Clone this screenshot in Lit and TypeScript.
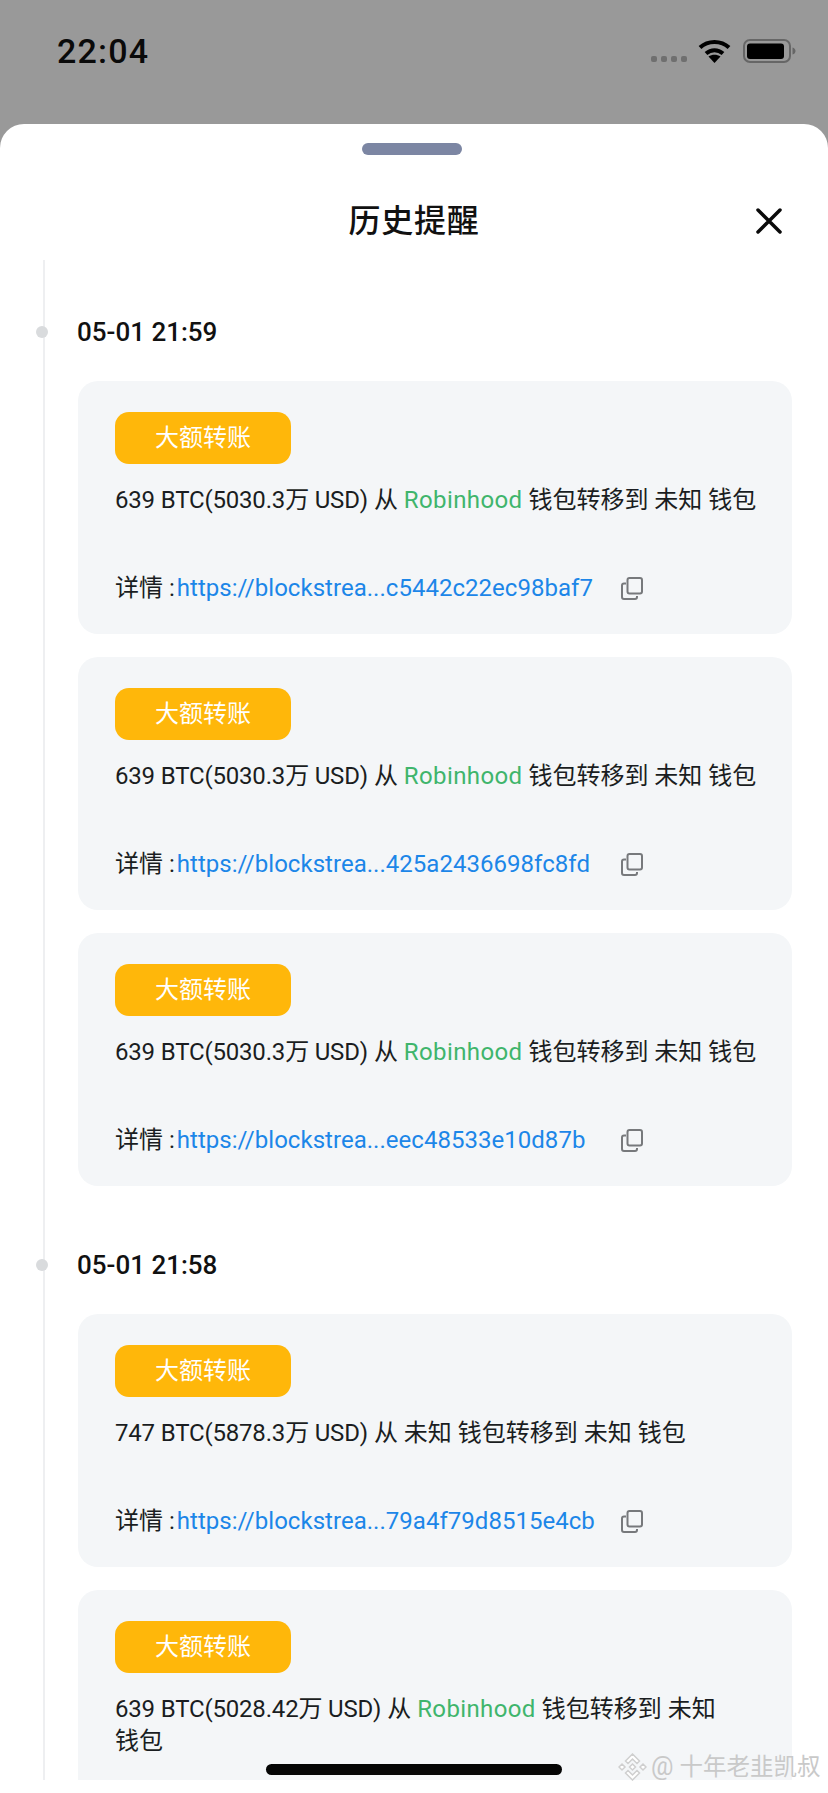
import { LitElement, html, css, svg } from "lit";
import { customElement } from "lit/decorators.js";

type Card = { amt: string; from?: string; to: string; hash?: string };
const groups: { date: string; cards: Card[] }[] = [
  {
    date: "05-01 21:59",
    cards: [
      { amt: "639 BTC(5030.3万 USD)", from: "Robinhood", to: "未知", hash: "https://blockstrea...c5442c22ec98baf7" },
      { amt: "639 BTC(5030.3万 USD)", from: "Robinhood", to: "未知", hash: "https://blockstrea...425a2436698fc8fd" },
      { amt: "639 BTC(5030.3万 USD)", from: "Robinhood", to: "未知", hash: "https://blockstrea...eec48533e10d87b" },
    ],
  },
  {
    date: "05-01 21:58",
    cards: [
      { amt: "747 BTC(5878.3万 USD)", to: "未知", hash: "https://blockstrea...79a4f79d8515e4cb" },
      { amt: "639 BTC(5028.42万 USD)", from: "Robinhood", to: "未知" },
    ],
  },
];

const copyIcon = svg`<svg class="copy" viewBox="0 0 22 23" width="22" height="23" fill="none" stroke="#77797c" stroke-width="2">
  <rect x="6.5" y="1" width="14.5" height="15.5" rx="2"/>
  <path d="M5 6.5H3a2 2 0 0 0-2 2V20a2 2 0 0 0 2 2h11a2 2 0 0 0 2-2v-1"/>
</svg>`;

@customElement("app-root")
export class AppRoot extends LitElement {
  static styles = css`
    :host {
      display: block;
      width: 828px;
      height: 1793px;
      overflow: hidden;
      position: relative;
      background: #999999;
      font-family: Roboto, "Noto Sans CJK SC", sans-serif;
      color: #1e2329;
    }
    .status {
      height: 124px;
      display: flex;
      justify-content: space-between;
      padding: 0 32px 0 57px;
      box-sizing: border-box;
    }
    .time {
      font-weight: 500;
      font-size: 34px;
      line-height: 36px;
      margin-top: 33px;
      color: #0a0a0a;
      letter-spacing: 1.2px;
    }
    .status-icons { display: flex; align-items: flex-start; margin-top: 38px; }
    .dots { display: flex; gap: 4px; margin-top: 18px; margin-right: 11px; }
    .dots i { width: 6px; height: 6px; border-radius: 2px; background: #6f6f6f; display: block; }
    .wifi { margin-right: 12px; display: block; }
    .battery { display: block; margin-top: 1px; }
    .sheet {
      height: 1669px;
      background: #fff;
      border-radius: 24px 24px 0 0;
      display: flex;
      flex-direction: column;
      overflow: hidden;
    }
    .handle {
      width: 100px;
      height: 12px;
      border-radius: 6px;
      background: #7c86a3;
      margin: 19px auto 0;
      position: relative;
      left: -2px;
    }
    .head {
      height: 105px;
      box-sizing: border-box;
      padding-top: 27px;
      display: grid;
      grid-template-columns: 1fr auto 1fr;
      align-items: center;
    }
    .title {
      grid-column: 2;
      font-size: 32px;
      line-height: 44px;
      font-weight: 500;
      color: #111;
      letter-spacing: 0.8px;
    }
    .close { grid-column: 3; justify-self: end; margin-right: 46px; display: block; }
    .timeline {
      margin-left: 43px;
      width: 749px;
      height: 1521px;
      flex: none;
      box-sizing: border-box;
      border-left: 2px solid #eeeff1;
      padding-left: 33px;
    }
    .group { position: relative; padding-top: 55px; padding-bottom: 6px; }
    .group + .group { padding-top: 56px; }
    .date {
      font-size: 26px;
      line-height: 34px;
      font-weight: 500;
      color: #111;
      margin-bottom: 32px;
      position: relative;
      left: -1px;
    }
    .date::before {
      content: "";
      position: absolute;
      left: -41px;
      top: 11px;
      width: 12px;
      height: 12px;
      border-radius: 50%;
      background: #d9dbdd;
    }
    .cards { display: flex; flex-direction: column; gap: 23px; }
    .card {
      background: #f4f6f8;
      border-radius: 20px;
      padding: 31px 30px 31px 37px;
      height: 253px;
      box-sizing: border-box;
    }
    .tag {
      width: 176px;
      height: 52px;
      border-radius: 14px;
      background: #ffb70a;
      color: #fff;
      font-size: 24px;
      display: flex;
      align-items: center;
      justify-content: center;
      line-height: 1;
    }
    .text {
      margin-top: 20px;
      font-size: 24px;
      line-height: 32px;
      color: #1a1d21;
    }
    .amt { letter-spacing: -0.18px; }
    .green { color: #3fb56c; letter-spacing: 0.38px; }
    .nb { white-space: nowrap; }
    .detail {
      margin-top: 56px;
      display: flex;
      align-items: center;
      font-size: 24px;
      line-height: 32px;
      color: #1a1d21;
    }
    .detail-text { width: 506px; white-space: nowrap; }
    .link { color: #1c86e8; margin-left: 2px; letter-spacing: 0.03px; }
    .copy { display: block; }
    .home {
      position: absolute;
      left: 266px;
      top: 1764px;
      width: 296px;
      height: 11px;
      border-radius: 6px;
      background: #050505;
    }
    .fade {
      position: absolute;
      left: 0;
      right: 0;
      top: 1780px;
      height: 13px;
      background: #fff;
    }
    .wm {
      position: absolute;
      left: 618px;
      top: 1751px;
      display: flex;
      align-items: center;
      gap: 4px;
      color: #c9c9c9;
      font-size: 23.5px;
      line-height: 32px;
      white-space: nowrap;
    }
    .wm svg { display: block; }
    .wm .at { font-size: 25px; margin-right: 2px; }
  `;

  private card(c: Card) {
    return html`<div class="card">
      <div class="tag">大额转账</div>
      <div class="text"><span class="amt">${c.amt}</span> 从 ${c.from
        ? html`<span class="green">${c.from}</span>`
        : "未知"} 钱包转移到 ${c.to} <span class="nb">钱包</span></div>
      ${c.hash
        ? html`<div class="detail">
            <div class="detail-text">详情 :<span class="link">${c.hash}</span></div>
            ${copyIcon}
          </div>`
        : ""}
    </div>`;
  }

  render() {
    return html`
      <div class="status">
        <div class="time">22:04</div>
        <div class="status-icons">
          <div class="dots"><i></i><i></i><i></i><i></i></div>
          <svg class="wifi" width="33" height="25" viewBox="0 0 33 25">
            <path fill="none" stroke="#000" stroke-width="4" d="M2 9.5C10 2 23 2 31 9.5"/>
            <path fill="none" stroke="#000" stroke-width="4" d="M8 15.5c5-4.500 12-4.500 17 0"/>
            <path fill="#000" d="M16.500 25l-6-6.500c3.500-2.500 8.500-2.500 12 0z"/>
          </svg>
          <svg class="battery" width="53" height="25" viewBox="0 0 53 25">
            <rect x="1" y="1" width="46" height="22" rx="6" fill="none" stroke="#666" stroke-width="2"/>
            <rect x="4" y="4.500" width="37" height="15.500" rx="3" fill="#000"/>
            <path d="M49.500 8.500c2 .5 3 2 3 3.500s-1 3-3 3.500z" fill="#666"/>
          </svg>
        </div>
      </div>
      <div class="sheet">
        <div class="handle"></div>
        <div class="head">
          <div class="title">历史提醒</div>
          <svg class="close" width="26" height="26" viewBox="0 0 26 26" fill="none" stroke="#0a0a0a" stroke-width="3.5" stroke-linecap="round">
            <path d="M2 2l22 22M24 2L2 24"/>
          </svg>
        </div>
        <div class="timeline">
          ${groups.map(
            (g) => html`<div class="group">
              <div class="date">${g.date}</div>
              <div class="cards">${g.cards.map((c) => this.card(c))}</div>
            </div>`
          )}
        </div>
      </div>
      <div class="fade"></div>
      <div class="home"></div>
      <div class="wm">
        <svg width="29" height="28" viewBox="0 0 29 28" fill="#fff" stroke="#cfcfcf" stroke-width="1.500">
          <path d="M14.500 11l3 3-3 3-3-3z"/>
          <path d="M14.500 1l7 7-2.500 2.500-4.500-4.500-4.500 4.500L7.500 8z"/>
          <path d="M14.500 27l7-7-2.500-2.500-4.500 4.500-4.500-4.500L7.500 20z"/>
          <path d="M4 11l3 3-3 3-3-3zM25 11l3 3-3 3-3-3z"/>
        </svg>
        <span class="at">@</span>
        <span>十年老韭凯叔</span>
      </div>
    `;
  }
}
